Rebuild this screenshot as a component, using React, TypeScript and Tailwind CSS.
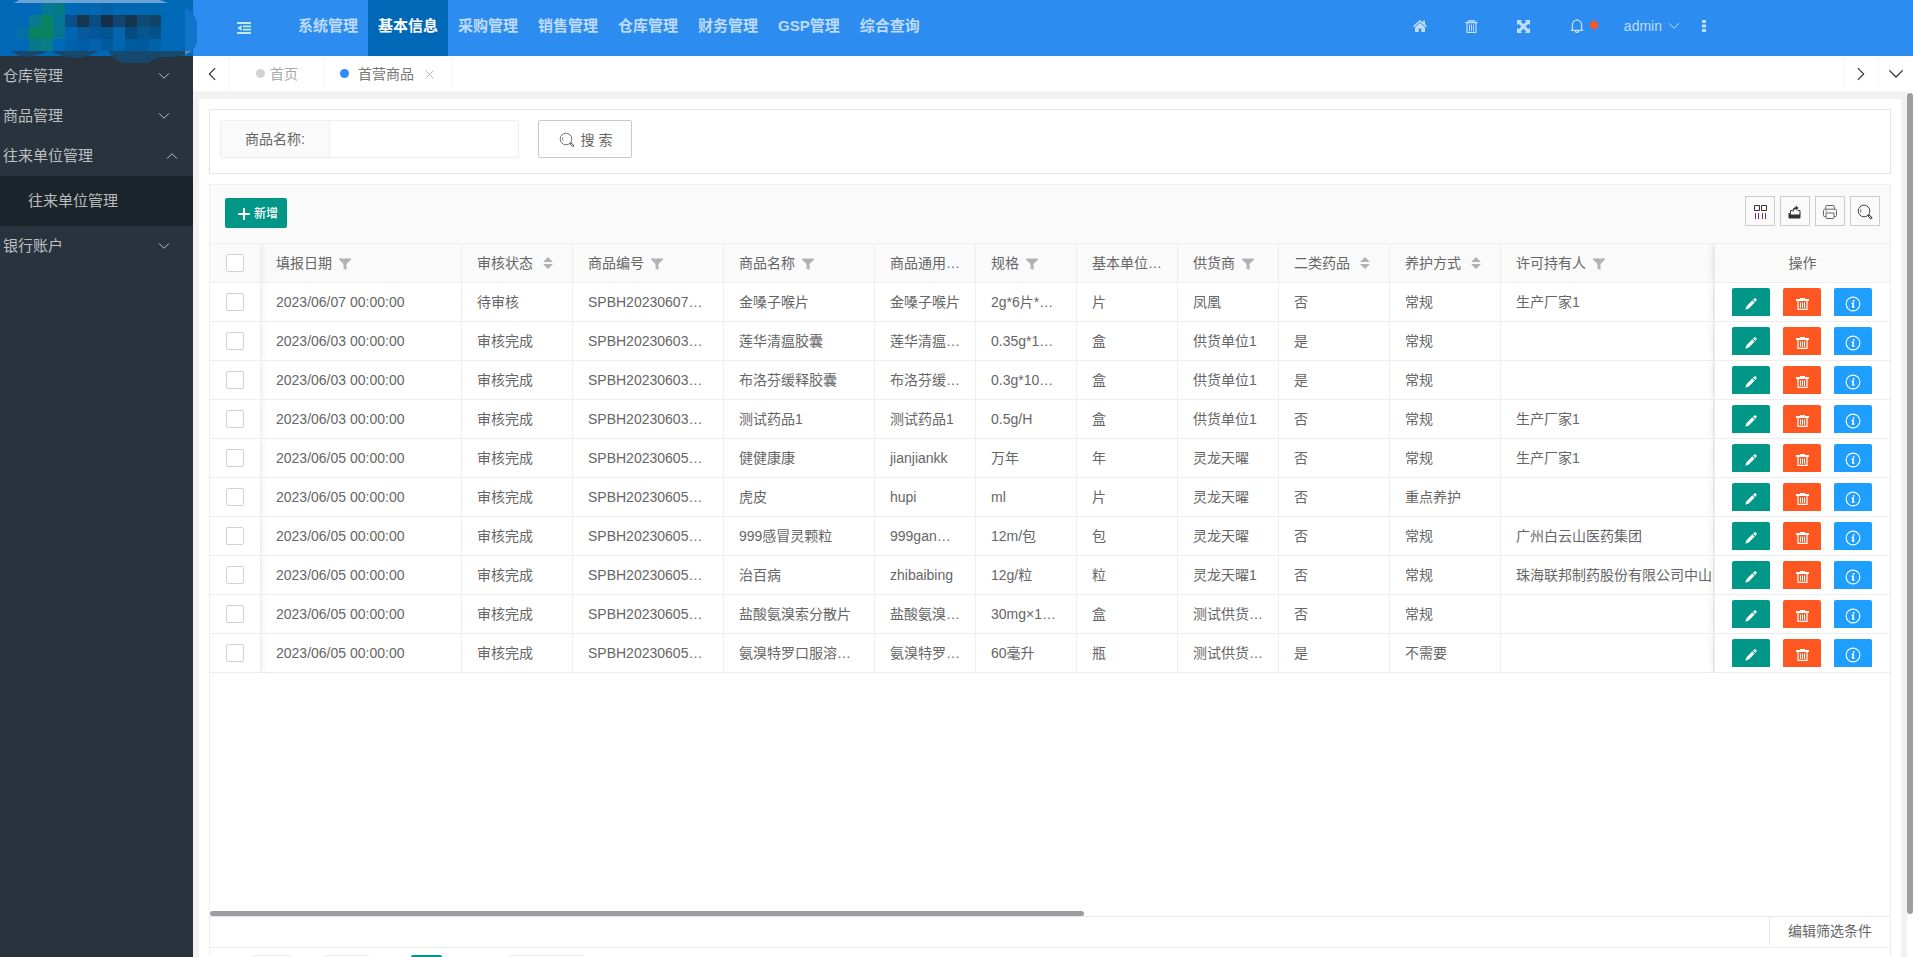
import { ReactNode } from "react";

type Mark = "filter" | "sort" | "none";

const NAV = ["系统管理", "基本信息", "采购管理", "销售管理", "仓库管理", "财务管理", "GSP管理", "综合查询"];
const ACTIVE_NAV = "基本信息";

const COLUMNS: { title: string; mark: Mark; width: string }[] = [
    { title: "填报日期", mark: "filter", width: "w-[201px]" },
    { title: "审核状态", mark: "sort", width: "w-[111px]" },
    { title: "商品编号", mark: "filter", width: "w-[151px]" },
    { title: "商品名称", mark: "filter", width: "w-[151px]" },
    { title: "商品通用…", mark: "none", width: "w-[101px]" },
    { title: "规格", mark: "filter", width: "w-[101px]" },
    { title: "基本单位…", mark: "none", width: "w-[101px]" },
    { title: "供货商", mark: "filter", width: "w-[101px]" },
    { title: "二类药品", mark: "sort", width: "w-[111px]" },
    { title: "养护方式", mark: "sort", width: "w-[111px]" },
    { title: "许可持有人", mark: "filter", width: "" },
];

const ROWS = [
    ["2023/06/07 00:00:00", "待审核", "SPBH20230607…", "金嗓子喉片", "金嗓子喉片", "2g*6片*…", "片", "凤凰", "否", "常规", "生产厂家1"],
    ["2023/06/03 00:00:00", "审核完成", "SPBH20230603…", "莲华清瘟胶囊", "莲华清瘟…", "0.35g*1…", "盒", "供货单位1", "是", "常规", ""],
    ["2023/06/03 00:00:00", "审核完成", "SPBH20230603…", "布洛芬缓释胶囊", "布洛芬缓…", "0.3g*10…", "盒", "供货单位1", "是", "常规", ""],
    ["2023/06/03 00:00:00", "审核完成", "SPBH20230603…", "测试药品1", "测试药品1", "0.5g/H", "盒", "供货单位1", "否", "常规", "生产厂家1"],
    ["2023/06/05 00:00:00", "审核完成", "SPBH20230605…", "健健康康", "jianjiankk", "万年", "年", "灵龙天曜", "否", "常规", "生产厂家1"],
    ["2023/06/05 00:00:00", "审核完成", "SPBH20230605…", "虎皮", "hupi", "ml", "片", "灵龙天曜", "否", "重点养护", ""],
    ["2023/06/05 00:00:00", "审核完成", "SPBH20230605…", "999感冒灵颗粒", "999gan…", "12m/包", "包", "灵龙天曜", "否", "常规", "广州白云山医药集团"],
    ["2023/06/05 00:00:00", "审核完成", "SPBH20230605…", "治百病", "zhibaibing", "12g/粒", "粒", "灵龙天曜1", "否", "常规", "珠海联邦制药股份有限公司中山"],
    ["2023/06/05 00:00:00", "审核完成", "SPBH20230605…", "盐酸氨溴索分散片", "盐酸氨溴…", "30mg×1…", "盒", "测试供货…", "否", "常规", ""],
    ["2023/06/05 00:00:00", "审核完成", "SPBH20230605…", "氨溴特罗口服溶…", "氨溴特罗…", "60毫升", "瓶", "测试供货…", "是", "不需要", ""],
];

// logo tiles, 12px each
const TILES = [
    ["#0069b9", "#0069b7", "#057896", "#067a84", "#0069b7", "#0067b3", "#0067b3", "#0362a8", "#0067b3", "#0067b3", "#0067b3", "#0067b3"],
    ["#0069b7", "#087a90", "#0a8264", "#037694", "#0a4f87", "#14364f", "#0b4d80", "#152f49", "#0f4570", "#13364f", "#0d4a75", "#104468"],
    ["#0570a5", "#08825f", "#08825f", "#06768f", "#0065b3", "#065a9b", "#04559a", "#045492", "#0564ac", "#054a80", "#05558f", "#04528b"],
    ["#0069b7", "#067889", "#067d88", "#0069b9", "#0062ad", "#005ca3", "#0262ab", "#005a9f", "#0065b0", "#005a9f", "#005a9f", "#0062a8"],
];

const CELL = "h-[39px] overflow-hidden border-b border-r border-[#eee] px-[15px] whitespace-nowrap";
const FIXED_LEFT = "relative z-10 h-[39px] border-b border-r border-[#eee] shadow-[1px_0_8px_rgba(0,0,0,0.08)] [clip-path:inset(0_-12px_0_0)]";
const FIXED_RIGHT = "relative z-10 h-[39px] border-b border-l border-[#eee] shadow-[-1px_0_8px_rgba(0,0,0,0.08)] [clip-path:inset(0_0_0_-12px)]";

function Chevron({ dir, size = 12 }: { dir: "up" | "down" | "left" | "right"; size?: number }) {
    const d = {
        up: "M1 8.7L6 3.7l5 5",
        down: "M1 3.3l5 5 5-5",
        left: "M8.7 1l-5 5 5 5",
        right: "M3.3 1l5 5-5 5",
    }[dir];
    return (
        <svg width={size} height={size} viewBox="0 0 12 12" fill="none" stroke="currentColor" strokeWidth="1" aria-hidden="true">
            <path d={d} />
        </svg>
    );
}

function Trash() {
    return (
        <svg width="13" height="13" viewBox="0 0 13 13" fill="none" stroke="currentColor" aria-hidden="true">
            <path d="M0.5 2.5h12" strokeWidth="1.6" />
            <path d="M4 2V0.6h5V2M2 3v9.4h9V3" strokeWidth="1.2" />
            <path d="M4.5 4.5v6.3M6.5 4.5v6.3M8.5 4.5v6.3" />
        </svg>
    );
}

function FlatTrash() {
    return (
        <svg width="13" height="12" viewBox="0 0 13 12" fill="none" stroke="currentColor" aria-hidden="true">
            <path d="M0 2h13" strokeWidth="2" />
            <path d="M4 0.5h5" />
            <path d="M2 3v8.4h9V3" strokeWidth="1.2" />
            <path d="M4.5 4.5v5.3M6.5 4.5v5.3M8.5 4.5v5.3" />
        </svg>
    );
}

function Search() {
    return (
        <svg width="16" height="16" viewBox="0 0 16 16" fill="none" stroke="currentColor" aria-hidden="true">
            <circle cx="7" cy="7" r="5.8" strokeWidth="0.9" />
            <path d="M4 8.8a3.6 3.6 0 0 1 0-3.6" strokeWidth="0.7" />
            <path d="M11.3 11.2l3.5 3.5" strokeWidth="2.4" />
            <path d="M11.9 11.8l2.5 2.5" stroke="white" strokeWidth="1" />
        </svg>
    );
}

function ColumnMark({ mark }: { mark: Mark }) {
    if (mark === "filter") {
        return (
            <svg width="12" height="12" viewBox="0 0 12 12" className="mt-px ml-[7px] shrink-0 fill-[#b2b2b2]" aria-hidden="true">
                <path d="M0 0.5h12v1L7.5 6v6L4.5 10.4V6L0 1.5z" />
            </svg>
        );
    }
    if (mark === "sort") {
        return (
            <svg width="10" height="12" viewBox="0 0 10 12" className="ml-[10px] shrink-0 fill-[#b2b2b2]" aria-hidden="true">
                <path d="M0 5l5-5 5 5zM0 7l5 5 5-5z" />
            </svg>
        );
    }
    return null;
}

function Check({ label }: { label: string }) {
    return (
        <input
            type="checkbox"
            aria-label={label}
            className="mx-auto block h-[18px] w-[18px] appearance-none rounded-xs border border-[#d2d2d2] bg-white"
        />
    );
}

function SideItem({ label, open = false }: { label: string; open?: boolean }) {
    return (
        <button
            type="button"
            aria-expanded={open}
            className={`flex h-10 w-full items-center justify-between pl-[3px] text-[15px] text-white/70 ${open ? "pr-[15px]" : "pr-[23px]"}`}
        >
            {label}
            <Chevron dir={open ? "up" : "down"} />
        </button>
    );
}

function HeaderButton({ label, children }: { label: string; children: ReactNode }) {
    return (
        <button type="button" aria-label={label} className="flex w-[52px] items-center justify-center">
            {children}
        </button>
    );
}

function ToolButton({ label, children }: { label: string; children: ReactNode }) {
    return (
        <button type="button" aria-label={label} className="flex h-[30px] w-[30px] items-center justify-center border border-[#ccc] pt-px text-[#333]">
            {children}
        </button>
    );
}

function ActionButton({ label, color, children }: { label: string; color: string; children: ReactNode }) {
    return (
        <button type="button" aria-label={label} className={`flex h-7 w-[38px] items-center justify-center rounded-t-xs pt-1 text-white ${color}`}>
            {children}
        </button>
    );
}

function Logo() {
    return (
        <svg width="198" height="63" viewBox="0 0 198 63" className="absolute top-0 left-0" role="img" aria-label="logo">
            <path d="M185 8q6 2 9 7l3 7v20q-1 8-12 13z" fill="#1273cb" />
            <path d="M14 3L19 0H160l8 3z" fill="#6ba4d4" />
            {TILES.map((row, y) =>
                row.map((fill, x) => <rect key={`${x}-${y}`} x={17 + x * 12} y={3 + y * 12} width="12" height="12" fill={fill} />)
            )}
            <path d="M10 51h38l-10 4q-6 2-13 2-8-1-15-6zM50 51h48q-8 6-22 7-14-1-26-7zM108 51h77v4q-6 2-13 2h-15l-9 6h-23q-11-2-17-12z" fill="#17496f" />
            <path d="M185 51h7l-7 4z" fill="#5b87b3" />
        </svg>
    );
}

function Header() {
    return (
        <header className="flex h-14 shrink-0 bg-[#2d8cf0] text-white/70">
            <div className="relative z-20 w-[193px] shrink-0 bg-[#0069b7]">
                <Logo />
            </div>
            <button type="button" aria-label="收起菜单" className="flex w-[95px] shrink-0 items-center pb-px pl-11">
                <svg width="14" height="12" viewBox="0 0 14 12" fill="currentColor" className="text-[#c3ece6]" aria-hidden="true">
                    <path d="M0 0h14v2H0zM6 3.5h8v1.7H6zM6 6.8h8v1.7H6zM0 10h14v2H0zM4.6 3v6L0.4 6z" />
                </svg>
            </button>
            <nav className="flex text-[15px] font-bold whitespace-nowrap">
                {NAV.map((item) => (
                    <a key={item} href="#" className={`flex items-center px-[10px] pb-1 ${item === ACTIVE_NAV ? "bg-[#0069b7] text-white" : ""}`}>
                        {item}
                    </a>
                ))}
            </nav>
            <div className="mr-[185px] ml-auto flex pb-1">
                <HeaderButton label="首页">
                    <svg width="14" height="12" viewBox="0 0 14 12" fill="currentColor" aria-hidden="true">
                        <path d="M7 0l3 2.6V0.8h2v3.5l2 1.8-0.9 1.1L7 2 0.9 7.2 0 6.1z" />
                        <path d="M7 3l5 4.3V12H8.3V8.4H5.7V12H2V7.3z" />
                    </svg>
                </HeaderButton>
                <HeaderButton label="清除">
                    <Trash />
                </HeaderButton>
                <HeaderButton label="全屏">
                    <svg width="13" height="13" viewBox="0 0 13 13" fill="currentColor" aria-hidden="true">
                        <path d="M0 0h5.2L3.8 1.6 6.5 4.3 9.2 1.6 7.8 0H13v5.2L11.4 3.8 8.7 6.5l2.7 2.7L13 7.8V13H7.8l1.4-1.6-2.7-2.7-2.7 2.7L5.2 13H0V7.8l1.6 1.4 2.7-2.7-2.7-2.7L0 5.2z" />
                    </svg>
                </HeaderButton>
                <button type="button" aria-label="消息" className="flex w-[74px] items-center gap-[6px] pl-5">
                    <svg width="14" height="14" viewBox="0 0 14 14" fill="none" stroke="currentColor" strokeWidth="1.3" aria-hidden="true">
                        <path d="M0.8 11.3h12.4M2.4 11V5.8a4.6 4.6 0 0 1 9.2 0V11M7 1.4V0M5 11.6a2 1.8 0 0 0 4 0" />
                    </svg>
                    <span className="mb-[2px] h-2 w-2 rounded-full bg-[#ff5722]" />
                </button>
                <button type="button" className="flex items-center gap-[6px]">
                    admin
                    <Chevron dir="down" />
                </button>
                <button type="button" aria-label="更多" className="flex w-12 items-center justify-center">
                    <svg width="4" height="12" viewBox="0 0 4 12" fill="currentColor" aria-hidden="true">
                        <path d="M0 0h4v3H0zM0 4.5h4v3H0zM0 9h4v3H0z" />
                    </svg>
                </button>
            </div>
        </header>
    );
}

function TabBar() {
    return (
        <div className="flex h-9 shrink-0 border-b border-[#f6f6f6] bg-white text-[#333]">
            <button type="button" aria-label="向左" className="flex w-[37px] items-center justify-center border-r border-[#f6f6f6] pl-px">
                <Chevron dir="left" size={14} />
            </button>
            <a href="#" className="flex w-[95px] items-center gap-[5px] border-r border-[#f6f6f6] pl-[26px] text-[#aaa]">
                <span className="h-[9px] w-[9px] rounded-full bg-[#d2d2d2]" />
                首页
            </a>
            <div className="flex w-[127px] items-center border-r border-[#f6f6f6] pl-[15px] text-[#777]">
                <span className="mr-[9px] h-[9px] w-[9px] rounded-full bg-[#2d8cf0]" />
                <a href="#">首营商品</a>
                <button type="button" aria-label="关闭" className="ml-[11px] pt-[2px] text-[#bbb]">
                    <svg width="9" height="9" viewBox="0 0 9 9" fill="none" stroke="currentColor" aria-hidden="true">
                        <path d="M0.5 0.5l8 8M8.5 0.5l-8 8" />
                    </svg>
                </button>
            </div>
            <button type="button" aria-label="向右" className="ml-auto flex w-[35px] items-center justify-center border-l border-[#f6f6f6]">
                <Chevron dir="right" size={14} />
            </button>
            <button type="button" aria-label="标签操作" className="flex w-[35px] items-center justify-center border-l border-[#f6f6f6]">
                <Chevron dir="down" size={16} />
            </button>
        </div>
    );
}

function Toolbar() {
    return (
        <div className="flex h-[59px] shrink-0 items-start justify-between border-b border-[#eee] bg-[#fafafa] pt-[11px] pr-[10px] pl-[15px]">
            <button type="button" className="mt-[2px] flex h-[30px] w-[62px] items-center justify-center gap-1 rounded-xs bg-[#009688] pt-[2px] pl-1 text-xs font-medium text-white">
                <svg width="12" height="12" viewBox="0 0 12 12" fill="none" stroke="currentColor" strokeWidth="2" aria-hidden="true">
                    <path d="M6 0v12M0 6h12" />
                </svg>
                新增
            </button>
            <div className="flex gap-[5px]">
                <ToolButton label="筛选列">
                    <svg width="14" height="14" viewBox="0 0 14 14" fill="none" stroke="currentColor" aria-hidden="true">
                        <path d="M1.5 0.5h5v5h-5zM8.5 0.5h5v5h-5z" />
                        <path d="M2.5 8v6M5.5 8v6M9.5 8v6M12.5 8v6" stroke="#7a2a7a" />
                    </svg>
                </ToolButton>
                <ToolButton label="导出">
                    <svg width="14" height="14" viewBox="0 0 14 14" aria-hidden="true">
                        <path d="M0.5 8h1.6l0.8 1.4h8.2L11.9 8H12.5v4.5q0 1-1 1h-10q-1 0-1-1z" fill="currentColor" />
                        <path d="M2.5 8.5V5.5h2M9.5 5.5h2.5v3" stroke="currentColor" fill="none" />
                        <path d="M4.6 6.4q-0.4-4 3.2-4.2V0.6l2.8 2.4-2.8 2.4V3.9Q5.4 4 5.6 6.4z" fill="currentColor" />
                    </svg>
                </ToolButton>
                <ToolButton label="打印">
                    <svg width="14" height="14" viewBox="0 0 14 14" fill="none" stroke="#666" aria-hidden="true">
                        <path d="M2.7 4V1.5q0-1 1-1h6.6q1 0 1 1V4" />
                        <path d="M3 11.5H1.6q-1.1 0-1.1-1V5.6q0-1.4 1.4-1.4h10.2q1.4 0 1.4 1.4v4.9q0 1-1.1 1H11" />
                        <path d="M3 8h8v4.5q0 1-1 1H4q-1 0-1-1zM2.6 6.1h1.6" />
                    </svg>
                </ToolButton>
                <ToolButton label="搜索">
                    <Search />
                </ToolButton>
            </div>
        </div>
    );
}

function DataTable() {
    return (
        <table className="w-full table-fixed border-separate border-spacing-0 text-left">
            <thead>
                <tr className="bg-[#fafafa]">
                    <th className={`w-[51px] bg-[#fafafa] ${FIXED_LEFT}`}>
                        <Check label="全选" />
                    </th>
                    {COLUMNS.map(({ title, mark, width }) => (
                        <th key={title} className={`font-normal ${CELL} ${width}`}>
                            <div className="flex items-center">
                                {title}
                                <ColumnMark mark={mark} />
                            </div>
                        </th>
                    ))}
                    <th className={`w-[176px] bg-[#fafafa] text-center font-normal ${FIXED_RIGHT}`}>操作</th>
                </tr>
            </thead>
            <tbody>
                {ROWS.map((row, i) => (
                    <tr key={i}>
                        <td className={`bg-white ${FIXED_LEFT}`}>
                            <Check label={`选择第${i + 1}行`} />
                        </td>
                        {row.map((value, j) => (
                            <td key={j} className={CELL}>{value}</td>
                        ))}
                        <td className={`bg-white pr-px ${FIXED_RIGHT}`}>
                            <div className="flex justify-center gap-[13px]">
                                <ActionButton label="编辑" color="bg-[#009688]">
                                    <svg width="12" height="12" viewBox="0 0 12 12" fill="currentColor" aria-hidden="true">
                                        <path d="M8 1.5L9.4 0.5q0.9-0.7 1.8 0.2 0.8 0.9 0.2 1.8L10.3 4zM7.3 2.2l2.4 2.4L3.8 10.5 0.3 11.8 1.5 8.2z" />
                                    </svg>
                                </ActionButton>
                                <ActionButton label="删除" color="bg-[#ff5722]">
                                    <FlatTrash />
                                </ActionButton>
                                <ActionButton label="详情" color="bg-[#1e9fff]">
                                    <svg width="16" height="16" viewBox="0 0 16 16" fill="none" stroke="currentColor" aria-hidden="true">
                                        <circle cx="8" cy="8" r="6.9" strokeWidth="1.1" />
                                        <path d="M8.6 4v1.7M6.6 7.2h1.7l-0.6 3.9h1.7" strokeWidth="1.5" />
                                    </svg>
                                </ActionButton>
                            </div>
                        </td>
                    </tr>
                ))}
            </tbody>
        </table>
    );
}

export default function App() {
    return (
        <div className="flex h-screen flex-col overflow-hidden bg-[#f2f2f2] font-['Liberation_Sans','Noto_Sans_CJK_SC',sans-serif] text-sm text-[#666]">
            <Header />
            <div className="flex min-h-0 flex-1">
                <aside className="w-[193px] shrink-0 bg-[#28333e]">
                    <SideItem label="仓库管理" />
                    <SideItem label="商品管理" />
                    <SideItem label="往来单位管理" open />
                    <a href="#" className="flex h-[50px] items-center rounded-r-xs bg-[#1c242b] pl-7 text-[15px] text-white/70">往来单位管理</a>
                    <SideItem label="银行账户" />
                </aside>
                <div className="flex min-w-0 flex-1 flex-col">
                    <TabBar />
                    <div className="flex min-h-0 flex-1">
                        <main className="flex min-w-0 flex-1 flex-col px-[6px] pt-[7px]">
                            <div className="flex min-h-0 flex-1 flex-col gap-[10px] rounded-t-sm bg-white px-[10px] pt-[10px]">
                                <form className="flex shrink-0 gap-[19px] border border-[#e6e6e6] px-[10px] pt-[10px] pb-[15px]">
                                    <div className="flex h-[38px] w-[299px] rounded-xs border border-[#eee]">
                                        <label htmlFor="goods-name" className="flex w-[109px] items-center justify-center border-r border-[#eee] bg-[#fafafa]">
                                            商品名称:
                                        </label>
                                        <input id="goods-name" type="text" className="min-w-0 flex-1 px-[10px] outline-none" />
                                    </div>
                                    <button type="button" className="flex h-[38px] w-[94px] items-center justify-center gap-[6px] rounded-xs border border-[#c9c9c9] pt-[2px] pl-px">
                                        <Search />
                                        搜 索
                                    </button>
                                </form>
                                <section className="flex min-h-0 flex-1 flex-col border-x border-t border-[#eee]">
                                    <Toolbar />
                                    <div className="min-h-0 flex-1 overflow-hidden">
                                        <DataTable />
                                    </div>
                                    <div className="h-[6px] shrink-0 border-b border-[#e6e6e6]">
                                        <div className="h-[5px] w-[52%] rounded-full bg-[#9c9ca1]" />
                                    </div>
                                    <div className="flex h-[31px] shrink-0 items-start justify-end border-b border-[#eee]">
                                        <button type="button" className="h-7 border-l border-[#e6e6e6] px-[18px]">编辑筛选条件</button>
                                    </div>
                                    <div className="flex h-[9px] shrink-0 items-start overflow-hidden pt-[7px] pl-[41px]">
                                        <button type="button" aria-label="上一页" className="mr-8 h-[26px] w-10 rounded-xs border border-[#eee]" />
                                        <button type="button" aria-label="第一页" className="mr-[42px] h-[26px] w-[46px] rounded-xs border border-[#eee]" />
                                        <button type="button" aria-label="当前页" className="mr-[67px] h-[26px] w-[31px] rounded-xs bg-[#009688]" />
                                        <button type="button" aria-label="每页条数" className="h-[26px] w-[75px] rounded-xs border border-[#eee]" />
                                    </div>
                                </section>
                            </div>
                        </main>
                        <div className="w-[6px] shrink-0 bg-white pt-px">
                            <div className="h-[95%] rounded-full bg-[#9c9ca1]" />
                        </div>
                    </div>
                </div>
            </div>
        </div>
    );
}
